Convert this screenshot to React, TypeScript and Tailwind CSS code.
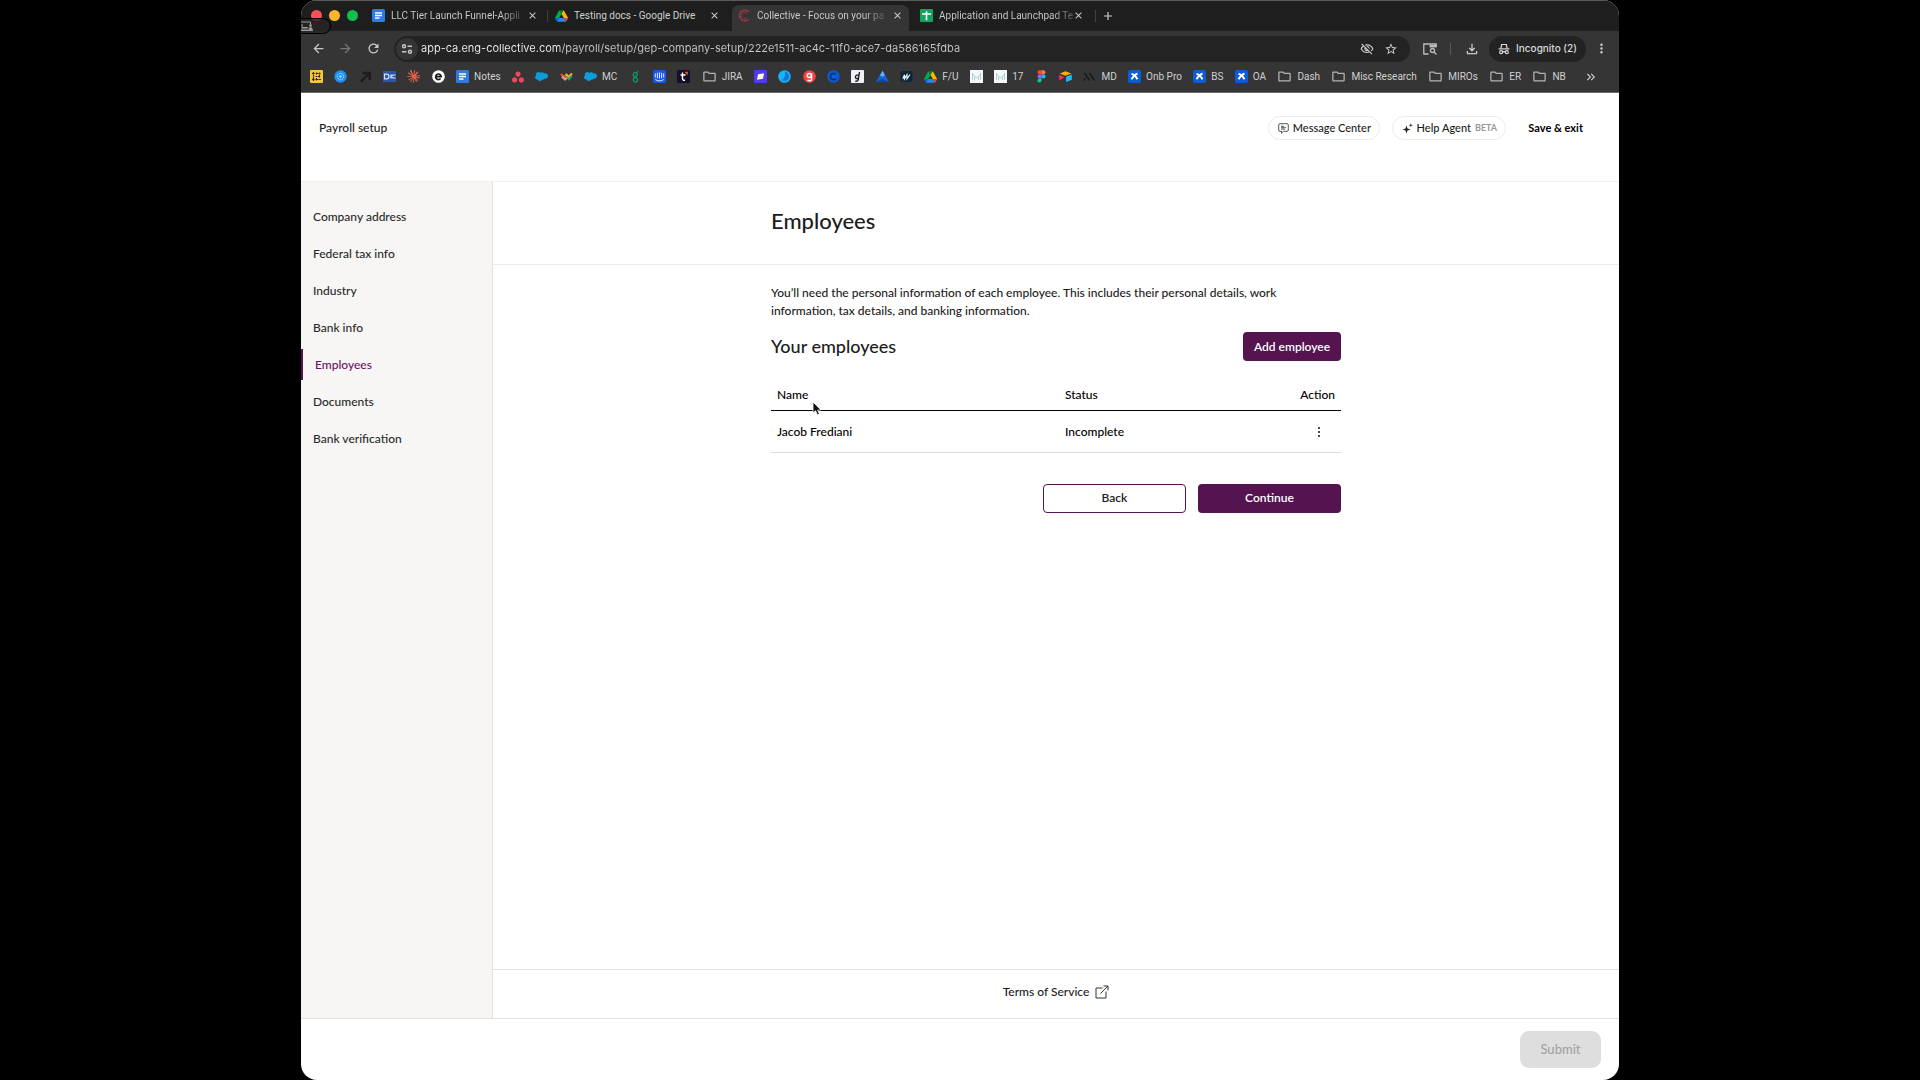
import type { ReactNode } from "react";
import {
  MdAdd,
  MdArrowBack,
  MdArrowForward,
  MdClose,
  MdKeyboardDoubleArrowRight,
  MdMoreVert,
  MdOutlineFileDownload,
  MdOutlineFolder,
  MdOutlineVisibilityOff,
  MdRefresh,
  MdStarBorder,
} from "react-icons/md";
import { SiAsana, SiClaude, SiSalesforce } from "react-icons/si";

/* ---------- Site and bookmark icons ---------- */

const DocsIcon = () => (
  <svg viewBox="0 0 13 13" className="size-[13px]">
    <rect width="13" height="13" rx="1.5" fill="#2f7be0" />
    <path d="M3 4h7M3 6.5h7M3 9h4.5" stroke="#fff" strokeWidth="1.3" />
  </svg>
);

const DriveIcon = () => (
  <svg viewBox="0 0 87.3 78" className="h-[12px] w-[13px]">
    <path d="M6.6 66.85l3.85 6.65c.8 1.4 1.95 2.5 3.3 3.3l13.75-23.8H0c0 1.55.4 3.1 1.2 4.5z" fill="#0066da" />
    <path d="M43.65 25L29.9 1.2c-1.35.8-2.5 1.9-3.3 3.3L1.2 48.5A9.06 9.06 0 0 0 0 53h27.5z" fill="#00ac47" />
    <path d="M73.55 76.8c1.35-.8 2.5-1.9 3.3-3.3l1.6-2.75 7.65-13.25c.8-1.4 1.2-2.95 1.2-4.5H59.8l5.85 11.5z" fill="#ea4335" />
    <path d="M43.65 25L57.4 1.2C56.05.4 54.5 0 52.9 0H34.4c-1.6 0-3.15.45-4.5 1.2z" fill="#00832d" />
    <path d="M59.8 53H27.5L13.75 76.8c1.35.8 2.9 1.2 4.5 1.2h50.8c1.6 0 3.15-.45 4.5-1.2z" fill="#2684fc" />
    <path d="M73.4 26.5L60.7 4.5c-.8-1.4-1.95-2.5-3.3-3.3L43.65 25 59.8 53h27.45c0-1.55-.4-3.1-1.2-4.5z" fill="#ffba00" />
  </svg>
);

const CollectiveIcon = () => (
  <svg viewBox="0 0 13 13" className="size-[13px]" fill="none" stroke="#b5344a">
    <path d="M10.5 2.8A5.2 5.2 0 1 0 10.5 10.2" strokeWidth="2" strokeDasharray="1.4 .7" />
    <path d="M9 4.6a3 3 0 1 0 0 3.8" strokeWidth="1" strokeDasharray="1 .8" />
  </svg>
);

const SheetsIcon = () => (
  <svg viewBox="0 0 13 13" className="size-[13px]">
    <rect width="13" height="13" rx="1" fill="#12a45a" />
    <path d="M2 5h9M6.5 2.2v9" stroke="#fff" strokeWidth="1.6" />
  </svg>
);

const YellowGridIcon = () => (
  <svg viewBox="0 0 13 13" className="size-[13px]">
    <rect width="13" height="13" rx="1" fill="#f7c63b" />
    <path
      d="M3.5 2v9M2 3.5h3M6 3.500h5M2 9.500h3.500M6.500 9.500H11M5.500 6.500h3.500M9.500 2.500V8M6.500 2.500v2M6.500 8v3"
      stroke="#2b2510"
      strokeWidth="1.2"
      strokeDasharray="2 .5"
    />
  </svg>
);

const BlueRingIcon = () => (
  <svg viewBox="0 0 13 13" className="size-[13px]">
    <circle cx="6.5" cy="6.5" r="6.2" fill="#1d8ff0" />
    <circle cx="6.5" cy="6.5" r="3.2" fill="none" stroke="#aee0ff" strokeWidth="1" strokeDasharray="1.6 .6" />
    <circle cx="6.5" cy="6.5" r="1.2" fill="#aee0ff" />
  </svg>
);

const DarkArrowIcon = () => (
  <svg viewBox="0 0 13 13" className="size-[13px]" fill="none" stroke="#1c1c1c" strokeWidth="2.4">
    <path d="M2 11.500L9.500 4M3.500 3h7.300v7" />
  </svg>
);

const BlueCardIcon = () => (
  <svg viewBox="0 0 13 13" className="size-[13px]">
    <rect y="1" width="13" height="11" fill="#2d57a8" />
    <path d="M1.500 4.200v4.600h2.200a2.300 2.300 0 0 0 0-4.600zM8 4.500v4M8 6.500l2-1.500h2.500M8 6.500l2 1.500h2.500" fill="none" stroke="#d6e2fa" strokeWidth="1.2" />
  </svg>
);

const EIcon = () => (
  <svg viewBox="0 0 13 13" className="size-[13px]">
    <circle cx="6.5" cy="6.5" r="6.3" fill="#fff" />
    <path d="M3.700 6.600H9.200A2.800 2.800 0 1 0 8.600 8.600" fill="none" stroke="#161616" strokeWidth="1.6" />
  </svg>
);

const WavesIcon = () => (
  <svg viewBox="0 0 13 13" className="size-[13px]" fill="none" strokeWidth="2">
    <path d="M1 4l3 3 3-3" stroke="#e4572e" />
    <path d="M6 4l2.500 3L12 3.500" stroke="#f0b429" />
    <path d="M2 6.500L5 9.500l2.500-2.500" stroke="#e98" />
    <path d="M7 7l1.800 2.300L12 6" stroke="#27a36a" />
  </svg>
);

const GreenLoopIcon = () => (
  <svg viewBox="0 0 13 13" className="size-[13px]" fill="none" stroke="#149064" strokeWidth="1.3">
    <circle cx="6.2" cy="4.5" r="2" />
    <circle cx="6.4" cy="9.8" r="2.2" />
    <path d="M5.500 6.500c-1 .6-.5 1.100.9 1.100M7.800 3L9.200.8" />
  </svg>
);

const IntercomIcon = () => (
  <svg viewBox="0 0 13 13" className="size-[13px]">
    <rect width="13" height="13" rx="2" fill="#1458f0" />
    <path d="M2.300 3.500v4M4.400 2.800v5.500M6.500 2.500v6M8.600 2.800v5.500M10.700 3.500v4M2.300 9.500c2.400 1.900 6 1.900 8.400 0" stroke="#fff" strokeWidth=".9" fill="none" />
  </svg>
);

const TSquareIcon = () => (
  <svg viewBox="0 0 13 13" className="size-[13px]">
    <rect width="13" height="13" rx="1.5" fill="#150f2c" />
    <path d="M5.500 2.500v6q0 2 2.500 1.800M3.500 5h5" stroke="#fff" strokeWidth="1.4" fill="none" />
    <path d="M8 2.500h2.200v2.200" stroke="#f2542d" strokeWidth="1.3" fill="none" />
  </svg>
);

const PurpleFlagIcon = () => (
  <svg viewBox="0 0 13 13" className="size-[13px]">
    <rect width="13" height="13" rx="1" fill="#4f3be8" />
    <path d="M4 4.200l6-1-1 5.600-6 1z" fill="#fff" />
  </svg>
);

const BlueMoonIcon = () => (
  <svg viewBox="0 0 13 13" className="size-[13px]">
    <circle cx="6.5" cy="6.5" r="6.3" fill="#18b3f7" />
    <path d="M6.500 1.800a4.700 4.700 0 1 1-3 8.300 6 6 0 0 0 3-8.300z" fill="#1477d4" />
  </svg>
);

const RedGIcon = () => (
  <svg viewBox="0 0 13 13" className="size-[13px]">
    <circle cx="6.5" cy="6.5" r="6.3" fill="#ef4444" />
    <path d="M8.600 3.500v5.200q0 2-2.200 2-1.300 0-2-.7" stroke="#fff" strokeWidth="1.4" fill="none" />
    <circle cx="6.3" cy="5.5" r="2" stroke="#fff" strokeWidth="1.4" fill="none" />
  </svg>
);

const BlueCIcon = () => (
  <svg viewBox="0 0 13 13" className="size-[13px]">
    <circle cx="6.5" cy="6.5" r="6.2" fill="#0b5fe0" />
    <path d="M8.800 4.600a3 3 0 1 0 0 3.800" stroke="#0a2a66" strokeWidth="1.500" fill="none" />
    <circle cx="6.5" cy="6.5" r="4.6" stroke="#0a3f9c" strokeWidth=".6" fill="none" />
  </svg>
);

const WhiteGIcon = () => (
  <svg viewBox="0 0 13 13" className="size-[13px]">
    <rect width="13" height="13" rx="1" fill="#f1f0f6" />
    <path d="M8.500 2L7.300 9.500q-.4 2-3 1.700M8 5.500q-3-1.200-3.500 1.200T7.500 8.300" stroke="#222" strokeWidth="1.4" fill="none" />
  </svg>
);

const MountainIcon = () => (
  <svg viewBox="0 0 13 13" className="size-[13px]">
    <path d="M6.500.8L13 12H0z" fill="#1565d8" />
    <path d="M6.500.8L9 5.200 6.500 6.800 4 5.200z" fill="#58b4ff" />
    <path d="M0 12l6.500-3.200L13 12z" fill="#0d47a1" />
  </svg>
);

const WavyMIcon = () => (
  <svg viewBox="0 0 13 13" className="size-[13px]">
    <rect x=".5" y="1" width="12" height="11" rx="2" fill="#0c2638" />
    <path d="M2.800 8.800l1.700-4v4l2.500-4v4l3-4.300" stroke="#e6f3fa" strokeWidth="1.2" fill="none" />
  </svg>
);

const MetricIcon = () => (
  <svg viewBox="0 0 13 13" className="size-[13px]">
    <rect width="13" height="13" fill="#f6f9fc" />
    <path d="M2.500 3.500v6.500M10.500 3.500v6.500M2.500 4l4 4 4-4" stroke="#8fb4cf" strokeWidth="1" strokeDasharray="1.4 .6" fill="none" />
    <path d="M4.500 6.500V10M8.500 6.500V10" stroke="#a9d5b5" strokeWidth="1" />
  </svg>
);

const FigmaIcon = () => (
  <svg viewBox="0 0 9 13" className="h-[13px] w-[13px]">
    <path d="M4.500.3H2.600a2.050 2.050 0 0 0 0 4.100h1.900z" fill="#f24e1e" />
    <path d="M4.500.3h1.900a2.050 2.050 0 0 1 0 4.100H4.500z" fill="#ff7262" />
    <path d="M4.500 4.400H2.600a2.050 2.050 0 0 0 0 4.100h1.900z" fill="#a259ff" />
    <circle cx="6.5" cy="6.45" r="2.05" fill="#1abcfe" />
    <path d="M2.600 8.500a2.050 2.050 0 1 0 1.900 2.050V8.500z" fill="#0acf83" />
  </svg>
);

const AirtableIcon = () => (
  <svg viewBox="0 0 13 13" className="size-[13px]">
    <path d="M6.500 1.200l5.700 2.200-5.700 2.300L.8 3.400z" fill="#fcb400" />
    <path d="M7.100 6.700l5.700-2.200v5.300l-5.700 2.300z" fill="#18bfff" />
    <path d="M.2 4.800l5.500 2.500L.2 10.400z" fill="#f82b60" />
  </svg>
);

const DarkStripesIcon = () => (
  <svg viewBox="0 0 13 13" className="size-[13px]">
    <path d="M.5 3h2l5 7.500h-2zM5.500 3h2l5 7.500h-2zM1 7l2.300 3.500H1z" fill="#1b1b1b" />
  </svg>
);

const BlueXIcon = () => (
  <svg viewBox="0 0 13 13" className="size-[13px]">
    <rect width="13" height="13" rx="2" fill="#0b5cd8" />
    <path d="M3.500 4q3 .2 6 5.200M9.500 3.800q-2.800.4-6 5.400" stroke="#fff" strokeWidth="2" fill="none" />
  </svg>
);

const FolderIcon = () => <MdOutlineFolder className="size-[15px] text-[#b4b4b4]" />;

const TuneIcon = () => (
  <svg viewBox="0 0 12 12" className="size-[12px]" fill="none" stroke="#c8c8c8" strokeWidth="1.4">
    <circle cx="3" cy="3.2" r="1.5" />
    <path d="M6.500 3.200H11M1 8.800h4.500" />
    <circle cx="9" cy="8.8" r="1.5" />
  </svg>
);

const SearchPanelIcon = () => (
  <svg viewBox="0 0 14 12" className="h-[12px] w-[14px]" fill="none" stroke="#bdbdbd" strokeWidth="1.3">
    <path d="M5.500 11H.8V1h12.400v3" />
    <path d="M6.500 2h7v2.400h-7z" fill="#bdbdbd" stroke="none" />
    <circle cx="9.5" cy="7.5" r="2" />
    <path d="M11 9l2.500 2.500" />
  </svg>
);

const IncognitoIcon = () => (
  <svg viewBox="0 0 12 12" className="size-[12px]" fill="none" stroke="#dcdcdc" strokeWidth="1.2">
    <path d="M.6 5.900h10.800" />
    <path d="M2.800 5.500L3.700 1.500h4.600l.9 4" />
    <circle cx="3.2" cy="9.2" r="1.5" />
    <circle cx="8.8" cy="9.2" r="1.5" />
    <path d="M4.700 8.900q1.300-.7 2.600 0" />
  </svg>
);

const ScreenShareIcon = () => (
  <svg viewBox="0 0 12 10" className="h-[10px] w-[12px]" fill="none" stroke="#9a9a9a" strokeWidth="1">
    <path d="M0 1h9.500v2M0 8h6.500M0 9.500h12M1 3v3.500h6" />
    <circle cx="9.5" cy="4.5" r="1" fill="#9a9a9a" />
    <path d="M7.800 8.500q0-2 1.700-2t1.700 2z" fill="#9a9a9a" />
  </svg>
);

const MessageIcon = () => (
  <svg viewBox="0 0 11 11" className="size-[11px]" fill="none" stroke="#444" strokeWidth=".9">
    <path d="M2 .7h7q1.300 0 1.300 1.300v5q0 1.300-1.300 1.300H5.500L3.500 10.200V8.300H2Q.7 8.300.7 7V2Q.7.700 2 .7z" />
    <path d="M3 3.300h3M3 4.700h5M3 6.100h4" />
  </svg>
);

const SparkleIcon = () => (
  <svg viewBox="0 0 11 11" className="size-[11px]" fill="#222">
    <path d="M4.500 2.500l1 3 3 1-3 1-1 3-1-3-3-1 3-1z" />
    <path d="M8.800.3l.5 1.500 1.500.5-1.500.5-.5 1.500-.5-1.500-1.500-.5 1.500-.5z" />
  </svg>
);

const ExternalIcon = () => (
  <svg viewBox="0 0 14 14" className="size-[14px]" fill="none" stroke="#333" strokeWidth="1">
    <path d="M7.500 3H1v10h10V6.500M5.500 8.500L13 1M8.500 1H13v4.500" />
  </svg>
);

const DotsIcon = () => (
  <svg viewBox="0 0 4 12" className="h-[12px] w-[4px]" fill="#111">
    <circle cx="2" cy="2" r="1" />
    <circle cx="2" cy="6" r="1" />
    <circle cx="2" cy="10" r="1" />
  </svg>
);

const Pointer = () => (
  <svg viewBox="0 0 10 15" className="h-[15px] w-[10px]">
    <path d="M1 1v11l2.600-2.300L5.400 14l2-.9-1.800-4H9z" fill="#111" stroke="#fff" strokeWidth=".8" />
  </svg>
);

/* ---------- Browser frame ---------- */

type TabProps = { icon: ReactNode; title: string; className: string; fade?: string };

function Tab({ icon, title, className, fade = "" }: TabProps) {
  return (
    <div className={`flex h-[26px] items-center gap-1.5 pr-[6px] pb-[5px] ${className}`}>
      <span className="shrink-0">{icon}</span>
      <span className="min-w-0 flex-1 whitespace-nowrap">
        <span className={fade}>{title}</span>
      </span>
      <button aria-label={`Close ${title}`} className="shrink-0 text-[#d0d0d0]">
        <MdClose className="size-[11px]" />
      </button>
    </div>
  );
}

const FADE = "bg-[linear-gradient(to_right,#d0d0d0_84%,#555)] bg-clip-text text-transparent";

function TabStrip() {
  return (
    <div className="relative flex h-[31px] items-end border-t border-[#5a5a5a] bg-[#1e1e1e] pl-[10px] text-[10px] text-[#d0d0d0]">
      <div className="flex h-[26px] items-center gap-[7px] pr-[14px] pb-[5px]">
        <span className="size-[11px] rounded-full bg-[#ff4f57]" />
        <span className="size-[11px] rounded-full bg-[#fdb32b]" />
        <span className="size-[11px] rounded-full bg-[#10bf4c]" />
      </div>
      <Tab className="w-[172px]" icon={<DocsIcon />} title="LLC Tier Launch Funnel-Appli" fade={FADE} />
      <span className="mr-[7px] mb-[9px] ml-[3px] h-[12px] w-px bg-[#444]" />
      <Tab className="w-[171px]" icon={<DriveIcon />} title="Testing docs - Google Drive" />
      <span className="size-[6px] rounded-br-[6px] bg-[#1e1e1e]" />
      <Tab
        className="w-[177px] rounded-t-[7px] bg-[#353535] pl-[6px]"
        icon={<CollectiveIcon />}
        title="Collective - Focus on your pa"
        fade={FADE}
      />
      <Tab className="ml-[11px] w-[170px]" icon={<SheetsIcon />} title="Application and Launchpad Te" fade={FADE} />
      <span className="mr-[5px] mb-[9px] ml-[5px] h-[12px] w-px bg-[#444]" />
      <button aria-label="New tab" className="mb-[8px] text-[#d0d0d0]">
        <MdAdd className="size-[14px]" />
      </button>
      <div className="absolute top-[17px] left-0 z-10 flex h-[16px] w-[30px] items-center rounded-r-[8px] border border-l-0 border-black bg-[#252525]/80">
        <ScreenShareIcon />
      </div>
    </div>
  );
}

function Toolbar() {
  return (
    <div className="flex h-[34px] items-center bg-[#353535] pt-px pr-[10px] pl-[10px] font-['Inter',sans-serif] text-[#c8c8c8]">
      <button aria-label="Back" className="mr-[12px]"><MdArrowBack className="size-[15px]" /></button>
      <button aria-label="Forward" className="mr-[13px] text-[#777]"><MdArrowForward className="size-[15px]" /></button>
      <button aria-label="Reload" className="mr-[13px]"><MdRefresh className="size-[15px]" /></button>
      <div className="flex h-[26px] flex-1 items-center rounded-full bg-[#232323] pr-[12px] pl-[2px]">
        <button aria-label="Site information" className="flex size-[22px] items-center justify-center rounded-full bg-[#353535]">
          <TuneIcon />
        </button>
        <input
          aria-label="Address"
          className="ml-[3px] min-w-0 flex-1 bg-[linear-gradient(to_right,#f0f0f0_139px,#c8c8c8_139px)] bg-clip-text text-[11px] text-transparent outline-none"
          defaultValue="app-ca.eng-collective.com/payroll/setup/gep-company-setup/222e1511-ac4c-11f0-ace7-da586165fdba"
        />
        <button aria-label="Third-party cookies blocked" className="mr-[10px]"><MdOutlineVisibilityOff className="size-[14px]" /></button>
        <button aria-label="Bookmark this tab"><MdStarBorder className="size-[14px]" /></button>
      </div>
      <button aria-label="Search side panel" className="ml-[13px]"><SearchPanelIcon /></button>
      <span className="mx-[13px] h-[12px] w-px bg-[#5a5a5a]" />
      <button aria-label="Downloads" className="mr-[9px]"><MdOutlineFileDownload className="size-[16px]" /></button>
      <button className="flex h-[26px] w-[97px] items-center justify-center gap-[6px] rounded-full bg-[#232323] text-[10px] font-medium whitespace-nowrap text-[#dcdcdc]">
        <IncognitoIcon />
        Incognito (2)
      </button>
      <button aria-label="Browser menu" className="ml-[8px]"><MdMoreVert className="size-[15px]" /></button>
    </div>
  );
}

const BOOKMARKS: { name: string; icon: ReactNode; text?: string }[] = [
  { name: "Grid", icon: <YellowGridIcon /> },
  { name: "Ring", icon: <BlueRingIcon /> },
  { name: "Arrow", icon: <DarkArrowIcon /> },
  { name: "Card", icon: <BlueCardIcon /> },
  { name: "Claude", icon: <SiClaude className="size-[13px] text-[#e0604a]" /> },
  { name: "E", icon: <EIcon /> },
  { name: "Notes", icon: <DocsIcon />, text: "Notes" },
  { name: "Asana", icon: <SiAsana className="size-[12px] text-[#f0485a]" /> },
  { name: "Salesforce", icon: <SiSalesforce className="size-[13px] text-[#0d9dda]" /> },
  { name: "Waves", icon: <WavesIcon /> },
  { name: "MC", icon: <SiSalesforce className="size-[13px] text-[#0d9dda]" />, text: "MC" },
  { name: "Loop", icon: <GreenLoopIcon /> },
  { name: "Intercom", icon: <IntercomIcon /> },
  { name: "T", icon: <TSquareIcon /> },
  { name: "JIRA", icon: <FolderIcon />, text: "JIRA" },
  { name: "Flag", icon: <PurpleFlagIcon /> },
  { name: "Moon", icon: <BlueMoonIcon /> },
  { name: "G", icon: <RedGIcon /> },
  { name: "C", icon: <BlueCIcon /> },
  { name: "White G", icon: <WhiteGIcon /> },
  { name: "Mountain", icon: <MountainIcon /> },
  { name: "M", icon: <WavyMIcon /> },
  { name: "F/U", icon: <DriveIcon />, text: "F/U" },
  { name: "Metric", icon: <MetricIcon /> },
  { name: "17", icon: <MetricIcon />, text: "17" },
  { name: "Figma", icon: <FigmaIcon /> },
  { name: "Airtable", icon: <AirtableIcon /> },
  { name: "MD", icon: <DarkStripesIcon />, text: "MD" },
  { name: "Onb Pro", icon: <BlueXIcon />, text: "Onb Pro" },
  { name: "BS", icon: <BlueXIcon />, text: "BS" },
  { name: "OA", icon: <BlueXIcon />, text: "OA" },
  { name: "Dash", icon: <FolderIcon />, text: "Dash" },
  { name: "Misc Research", icon: <FolderIcon />, text: "Misc Research" },
  { name: "MIROs", icon: <FolderIcon />, text: "MIROs" },
  { name: "ER", icon: <FolderIcon />, text: "ER" },
  { name: "NB", icon: <FolderIcon />, text: "NB" },
];

function BookmarksBar() {
  return (
    <nav aria-label="Bookmarks" className="flex h-[28px] items-center border-b border-[#6a6a6a] bg-[#353535] pr-[21px] pb-[4px] pl-[9px] text-[10px] text-[#d0d0d0]">
      <div className="flex flex-1 items-center justify-between">
        {BOOKMARKS.map((b) => (
          <a key={b.name} href="#" aria-label={b.name} className="flex items-center gap-[5px] whitespace-nowrap">
            {b.icon}
            {b.text}
          </a>
        ))}
      </div>
      <button aria-label="More bookmarks" className="ml-[18px]">
        <MdKeyboardDoubleArrowRight className="size-[14px]" />
      </button>
    </nav>
  );
}

/* ---------- Payroll page ---------- */

const STEPS = ["Company address", "Federal tax info", "Industry", "Bank info", "Employees", "Documents", "Bank verification"];

function PageHeader() {
  return (
    <header className="flex h-[89px] items-start justify-between border-b border-[#f0f0f0] pt-[23px] pr-[36px] pl-[18px]">
      <span className="text-[12px] leading-[24px]">Payroll setup</span>
      <div className="flex items-center gap-[12px] text-[11px] leading-[22px]">
        <button className="flex h-[24px] w-[112px] items-center justify-center gap-1 rounded-full border border-[#ececec] whitespace-nowrap">
          <MessageIcon />
          Message Center
        </button>
        <button className="flex h-[24px] w-[114px] items-center justify-center gap-1 rounded-full border border-[#ececec] whitespace-nowrap">
          <SparkleIcon />
          Help Agent
          <span className="text-[9px] font-bold text-[#999]">BETA</span>
        </button>
        <button className="ml-[10px] font-bold whitespace-nowrap text-black">Save &amp; exit</button>
      </div>
    </header>
  );
}

function Sidebar() {
  return (
    <nav aria-label="Setup steps" className="flex w-[192px] shrink-0 flex-col gap-[6px] border-r border-[#e2e2e2] bg-[#f7f6f4] pt-[19px] text-[12px]">
      {STEPS.map((step) => (
        <a
          key={step}
          href="#"
          className={
            step === "Employees"
              ? "border-l-2 border-[#55144f] pl-[12px] leading-[31px] text-[#6b1463]"
              : "pl-[12px] leading-[31px] text-[#2a2a2a]"
          }
        >
          {step}
        </a>
      ))}
    </nav>
  );
}

function EmployeeTable() {
  return (
    <div className="relative mt-[17px]">
      <table className="w-full table-fixed border-collapse text-left text-black">
        <thead>
          <tr className="h-[32px] border-b border-black">
            <th className="px-[6px] pt-[2px] font-medium">Name</th>
            <th className="w-[188px] px-[6px] pt-[2px] font-medium">Status</th>
            <th className="w-[94px] px-[6px] pt-[2px] text-right font-medium">Action</th>
          </tr>
        </thead>
        <tbody>
          <tr className="h-[42px] border-b border-[#dcdcdc]">
            <td className="px-[6px] pt-[2px]">Jacob Frediani</td>
            <td className="px-[6px] pt-[2px]">Incomplete</td>
            <td className="pt-[2px] pr-[20px]">
              <button aria-label="Actions for Jacob Frediani" className="ml-auto flex">
                <DotsIcon />
              </button>
            </td>
          </tr>
        </tbody>
      </table>
      <div className="pointer-events-none absolute top-[23px] left-[41px]">
        <Pointer />
      </div>
    </div>
  );
}

export default function App() {
  return (
    <div className="min-h-screen bg-black">
      <div className="mx-auto flex min-h-screen w-full max-w-[1318px] flex-col overflow-hidden rounded-[16px] bg-white">
        <div className="font-['Roboto',sans-serif]">
          <TabStrip />
          <Toolbar />
          <BookmarksBar />
        </div>
        <div className="flex flex-1 flex-col font-['Lato',sans-serif] text-[12px] font-medium text-[#1c1c1c]">
          <PageHeader />
          <div className="flex flex-1">
            <Sidebar />
            <main className="flex min-w-0 flex-1 flex-col">
              <div className="border-b border-[#ececec]">
                <h1 className="mx-auto max-w-[570px] pt-[23px] pb-[27px] text-[22px] leading-[32px]">Employees</h1>
              </div>
              <div className="mx-auto w-full max-w-[570px] flex-1 pt-[19px]">
                <p className="max-w-[520px] leading-[18px]">
                  You’ll need the personal information of each employee. This includes their personal details, work information, tax details,
                  and banking information.
                </p>
                <div className="mt-[12px] flex items-center justify-between">
                  <h2 className="text-[18px] leading-[29px]">Your employees</h2>
                  <button className="h-[29px] w-[98px] rounded-[4px] bg-[#55144f] font-semibold text-white">Add employee</button>
                </div>
                <EmployeeTable />
                <div className="mt-[31px] flex justify-end gap-[12px]">
                  <button className="h-[29px] w-[143px] rounded-[4px] border border-[#55144f] font-semibold">Back</button>
                  <button className="h-[29px] w-[143px] rounded-[4px] bg-[#55144f] font-semibold text-white">Continue</button>
                </div>
              </div>
              <div className="flex h-[49px] justify-center border-t border-[#e0e0e0] pt-[12px]">
                <a href="#" className="flex h-[20px] items-center gap-[6px]">
                  Terms of Service
                  <ExternalIcon />
                </a>
              </div>
            </main>
          </div>
          <footer className="flex h-[62px] items-start justify-end border-t border-[#e0e0e0] pt-[12px] pr-[18px]">
            <button disabled className="h-[37px] w-[81px] rounded-[9px] bg-[#dedede] text-[13px] text-[#a3a3a3]">Submit</button>
          </footer>
        </div>
      </div>
    </div>
  );
}
